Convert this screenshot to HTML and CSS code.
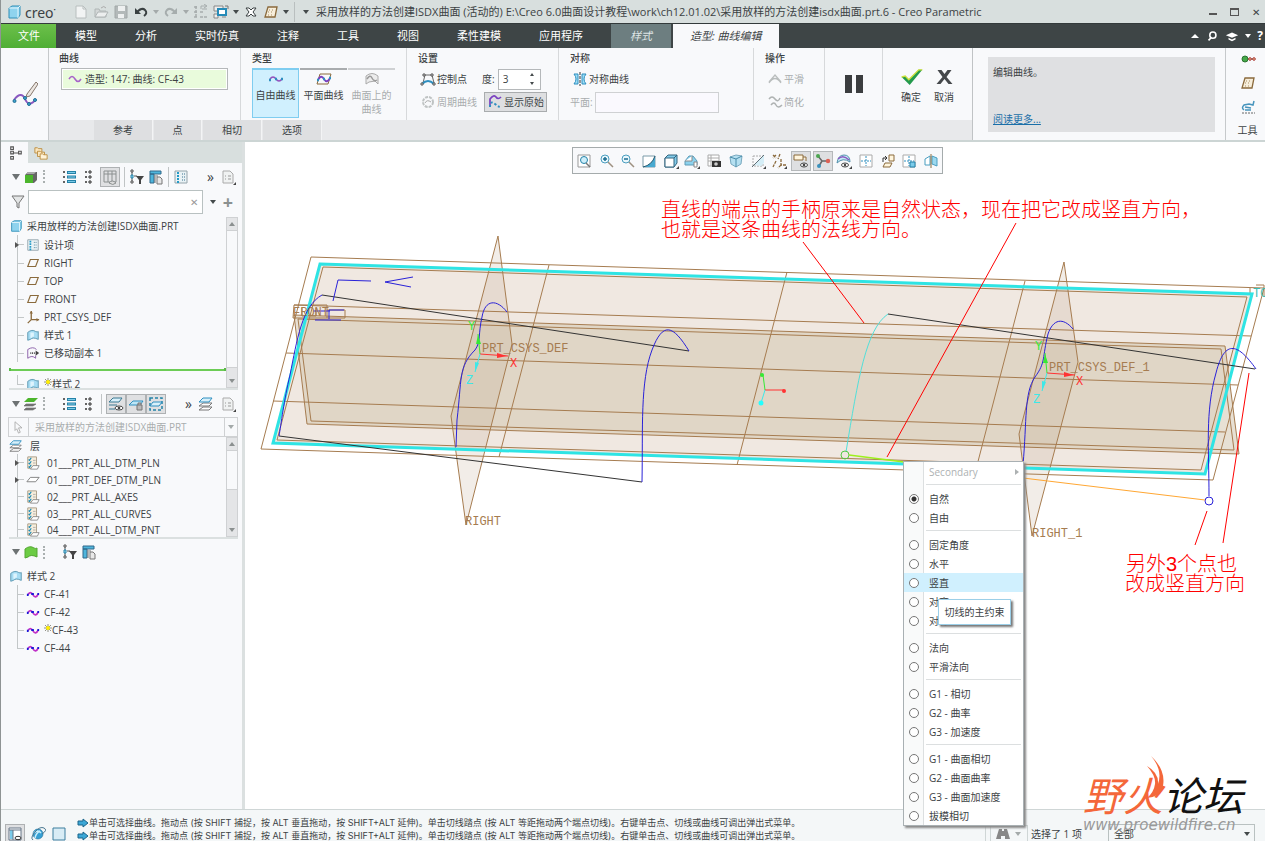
FILE: index.html
```
<!DOCTYPE html>
<html lang="zh-CN">
<head>
  <meta charset="UTF-8" />
  <meta name="viewport" content="width=device-width, initial-scale=1.0" />
  <title>采用放样的方法创建ISDX曲面 - Creo Parametric</title>
  <link rel="stylesheet" href="styles.css">
</head>
<body>
  <!-- icon sprite -->
  <svg class="sprite" aria-hidden="true">
    <symbol id="i-cube" viewBox="0 0 16 16"><path d="M3 4l3-2h8v9l-2 3H3z" fill="#8fd3ee" stroke="#2f8fb8"/><path d="M3 4h9l2-2M12 4v10" fill="none" stroke="#e4f6fd"/></symbol>
    <symbol id="i-new" viewBox="0 0 16 16"><path d="M3 2h7l3 3v9H3z" fill="#f2f4f4" stroke="#b8bebe"/><path d="M10 2v3h3" fill="none" stroke="#b8bebe"/></symbol>
    <symbol id="i-open" viewBox="0 0 16 16"><path d="M2 13V5h4l1 2h6v6z" fill="#d3d7d7" stroke="#b0b6b6"/><path d="M2 13l3-5h10l-3 5z" fill="#eceeee" stroke="#b0b6b6"/><path d="M8 4q3-3 5 0" fill="none" stroke="#aaa"/></symbol>
    <symbol id="i-save" viewBox="0 0 16 16"><path d="M2 2h12v12H2z" fill="#b3b9b9" stroke="#a2a8a8"/><path d="M5 2h7v5H5zM5 10h6v4H5z" fill="#eef0f0"/></symbol>
    <symbol id="i-undo" viewBox="0 0 16 16"><path d="M4 8q5-5 8-2t-1 6" fill="none" stroke="#3a4142" stroke-width="2"/><path d="M2 4v6h6z" fill="#3a4142"/></symbol>
    <symbol id="i-redo" viewBox="0 0 16 16"><path d="M12 8Q7 3 4 6t1 6" fill="none" stroke="#a6adad" stroke-width="2"/><path d="M14 4v6H8z" fill="#a6adad"/></symbol>
    <symbol id="i-regen" viewBox="0 0 16 16"><path d="M3 2v12M1 3h4M1 8h4M1 13h4M7 8h4M7 13h7" stroke="#a6adad" stroke-width="1.500" stroke-dasharray="3 1"/><path d="M8 5V2h5M11 0l3 2-3 2M9 5h5" fill="none" stroke="#a6adad"/></symbol>
    <symbol id="i-windows" viewBox="0 0 16 16"><path d="M1 2h9v5H1zM1 10h4v4H1zM9 13h4" fill="#eee" stroke="#888"/><path d="M5 5h8v6H5z" fill="#fff" stroke="#258bb8" stroke-width="2"/><path d="M12 2h3v3" fill="none" stroke="#777"/></symbol>
    <symbol id="i-closex" viewBox="0 0 16 16"><path d="M3 4h3l2 2 2-2h3l-3 4 3 4h-3L8 10l-2 2H3l3-4z" fill="#fff" stroke="#3a4142"/></symbol>
    <symbol id="i-sketch" viewBox="0 0 16 16"><path d="M5 3h9l-2 10H2z" fill="#f7eedb" stroke="#8a6a3c" stroke-width="1.300"/><path d="M6 6h6M5 8h6M5 11h6" stroke="#a88f65" stroke-dasharray="1 2"/></symbol>
    <symbol id="i-datum" viewBox="0 0 16 16"><path d="M5 4h9l-3 8H2z" fill="none" stroke="#8a6a3c" stroke-width="1.300"/></symbol>
    <symbol id="i-csys" viewBox="0 0 16 16"><path d="M6 1v10h9M6 11l-4 4" fill="none" stroke="#8a6a3c" stroke-width="1.500"/><path d="M4 4l2-3 2 3M12 9l3 2-3 2" fill="#8a6a3c"/></symbol>
    <symbol id="i-wave" viewBox="0 0 16 16"><path d="M2 8q3-5 6 0t6 0" fill="none" stroke="#a763c9" stroke-width="1.500"/></symbol>
    <symbol id="i-curve" viewBox="0 0 16 16"><path d="M2 8q3-4 6 0t6 0" fill="none" stroke="#9350bd" stroke-width="1.500"/><path d="M1 9h2M7 8h2M13 8h2" stroke="#2e8fc0" stroke-width="2.500"/></symbol>
    <symbol id="i-cf" viewBox="0 0 16 16"><path d="M2 9q3-5 6 0t6-1" fill="none" stroke="#c030c8" stroke-width="2"/><path d="M1 9h2M6 8h3M13 8h2" stroke="#1a1ad8" stroke-width="2.500"/></symbol>
    <symbol id="i-planecurve" viewBox="0 0 16 16"><path d="M4 3h11l-3 10H1z" fill="none" stroke="#8a6a3c"/><path d="M2 9q3-6 6-1t6-1" fill="none" stroke="#7a3fc0" stroke-width="1.800"/><path d="M1 9h2M7 8h2M13 7h2" stroke="#2e8fc0" stroke-width="2.500"/></symbol>
    <symbol id="i-surfcurve" viewBox="0 0 16 16"><path d="M2 13V5q6-5 12 0v8l-3-3-6 1z" fill="#ececec" stroke="#aaa"/><path d="M3 8q3-5 5-1t5 2" fill="none" stroke="#999" stroke-width="1.500"/></symbol>
    <symbol id="i-bigcurve" viewBox="0 0 26 26"><path d="M2 19C7 12 11 13 13 18S19 25 24 18" fill="none" stroke="#8a58c0" stroke-width="2"/><path d="M15 13L24 1l2 2-8 12-4 1z" fill="#ece7e2" stroke="#86776c"/><g fill="#3aa3cc" stroke="#226f96"><circle cx="2.500" cy="20" r="1.500"/><circle cx="13" cy="17" r="1.500"/><circle cx="17" cy="23" r="1.500"/><circle cx="23" cy="19" r="1.500"/></g></symbol>
    <symbol id="i-ctrl" viewBox="0 0 16 16"><path d="M3 12l2-8h7l2 8" fill="none" stroke="#666"/><path d="M2 13q6-6 12 0" fill="none" stroke="#2e8fc0" stroke-width="2"/><path d="M3 3h2v2H3zM11 3h2v2h-2zM1 12h2v2H1zM13 12h2v2h-2z" fill="#fff" stroke="#555"/></symbol>
    <symbol id="i-gear" viewBox="0 0 16 16"><circle cx="8" cy="8" r="5" fill="none" stroke="#bfc3c3" stroke-width="2" stroke-dasharray="3 1"/><path d="M5 9q2-4 6-1" fill="none" stroke="#aaa"/></symbol>
    <symbol id="i-orig" viewBox="0 0 16 16"><path d="M3 13V5q4-5 6-2t5 0" fill="none" stroke="#7a3fc0" stroke-width="1.700"/><path d="M3 13q0-7 5-3t6 3" fill="none" stroke="#2e8fc0" stroke-width="2" stroke-dasharray="2 2"/></symbol>
    <symbol id="i-sym" viewBox="0 0 16 16"><path d="M2 3h4v10H2q4-5 0-10zM14 3h-4v10h4q-4-5 0-10z" fill="#9bddf5" stroke="#2e8fc0"/><path d="M8 1v14" stroke="#333" stroke-dasharray="3 1"/></symbol>
    <symbol id="i-smooth" viewBox="0 0 16 16"><path d="M2 12q6-9 12 0M2 11L8 4l6 7" fill="none" stroke="#b9bdbd" stroke-width="1.300"/></symbol>
    <symbol id="i-simple" viewBox="0 0 16 16"><path d="M2 5q3-4 6 0t5-1M4 11q3-4 5 0t6 0" fill="none" stroke="#aeb2b2" stroke-width="1.500"/></symbol>
    <symbol id="i-pause" viewBox="0 0 20 20"><path d="M1 1h7v18H1zM12 1h7v18h-7z" fill="#3b3d3f"/></symbol>
    <symbol id="i-check" viewBox="0 0 24 20"><path d="M1 10l4-1 4 4L20 2h4L10 19z" fill="#249a4d"/><path d="M1 10l4-1 4 4L20 2h4" fill="none" stroke="#cbe03a" stroke-width="1.500"/></symbol>
    <symbol id="i-cross" viewBox="0 0 18 18"><path d="M2 2h4l3 4 3-4h4l-5 7 6 7h-4l-4-5-4 5H1l6-7z" fill="#45484b"/></symbol>
    <symbol id="i-dots" viewBox="0 0 16 16"><path d="M6 8h8" stroke="#333"/><circle cx="5" cy="8" r="3" fill="#45a848" stroke="#2b7330"/><circle cx="10" cy="8" r="1.300" fill="#f5d9a0" stroke="#a33"/><circle cx="14" cy="8" r="1.300" fill="#f5d9a0" stroke="#a33"/></symbol>
    <symbol id="i-robot" viewBox="0 0 16 16"><path d="M4 11q-3-2 0-5l5-1 4 1 1-4M5 8l6 1M5 11h6" fill="none" stroke="#4795bd" stroke-width="1.500"/><path d="M2 14h13" stroke="#666" stroke-dasharray="2 1"/></symbol>
    <symbol id="i-treetab" viewBox="0 0 16 16"><path d="M2 1h3v3H2zM2 6h3v3H2zM2 12h3v3H2zM11 6h3v3h-3zM5 8h6" fill="none" stroke="#555" stroke-width="1.300"/></symbol>
    <symbol id="i-folders" viewBox="0 0 16 16"><path d="M1 2h3l1 1h4v5H1z" fill="#fbe6bd" stroke="#b98a3c"/><path d="M4 6h3l1 1h4v5H4z" fill="#fbe6bd" stroke="#b98a3c"/><path d="M7 9h3l1 1h4v5H7z" fill="#fff3d8" stroke="#b98a3c"/></symbol>
    <symbol id="i-green" viewBox="0 0 16 16"><path d="M2 6l3-3h9v8l-3 3H2z" fill="#666"/><path d="M2 6h8v8H2z" fill="#4cb52c"/><path d="M3 5l2-2h8l-2 2z" fill="#aaa"/></symbol>
    <symbol id="i-list" viewBox="0 0 16 16"><path d="M5 3.500h9M5 8h9M5 12.500h9" stroke="#2482a8" stroke-width="3"/><path d="M6 3.500h7M6 8h7M6 12.500h7" stroke="#7ccbe8"/><path d="M1 3h2M1 8h2M1 13h2" stroke="#333" stroke-width="1.500"/></symbol>
    <symbol id="i-list2" viewBox="0 0 16 16"><path d="M8 2h2v2H8zM8 7h2v2H8zM8 12h2v2H8z" fill="none" stroke="#333"/><path d="M4 3h2M4 8h2M4 13h2" stroke="#333" stroke-width="1.500"/></symbol>
    <symbol id="i-table" viewBox="0 0 16 16"><path d="M2 2h12v11H2zM2 5h12M6 2v11M10 2v11" fill="none" stroke="#8b9090"/><path d="M7 14q3-4 7 0-3 3-7 0" fill="#ddd" stroke="#8b9090"/></symbol>
    <symbol id="i-treefilter" viewBox="0 0 16 16"><path d="M2 1h2v2H2zM2 12h2v2H2zM3 3v9M5 7h3" fill="none" stroke="#555"/><path d="M2 6h2v3H2z" fill="#9bddf5" stroke="#2482a8"/><path d="M7 7h8l-3 4v4h-2v-4z" fill="#444"/></symbol>
    <symbol id="i-cols" viewBox="0 0 16 16"><path d="M2 2h11v3H2zM2 5h4v9H2z" fill="#4eb5dc" stroke="#30698a"/><path d="M7 6v8M9 6v2" stroke="#777"/><path d="M9 8h3l2 2v5H9z" fill="#e8e8e8" stroke="#777"/></symbol>
    <symbol id="i-items" viewBox="0 0 16 16"><path d="M2 2h12v12H2z" fill="#e9f2f5" stroke="#94a4ab"/><path d="M5 3v11" stroke="#249ac7" stroke-width="2" stroke-dasharray="2 1"/><path d="M9 5h4M9 8h4M9 11h4" stroke="#38718d" stroke-dasharray="1 1"/></symbol>
    <symbol id="i-doc" viewBox="0 0 16 16"><path d="M3 2h7l3 3v9H3z" fill="#f0f2f2" stroke="#aaa"/><path d="M5 7h1M8 7h3M5 10h1M8 10h3" stroke="#999"/><path d="M16 13v3h-3z" fill="#444"/></symbol>
    <symbol id="i-funnel" viewBox="0 0 16 16"><path d="M2 2h12L9 9v5l-2-1V9z" fill="#e4e6e6" stroke="#777"/></symbol>
    <symbol id="i-style" viewBox="0 0 16 16"><path d="M2 14V5q5-4 9-1 2 1 3 0v9q-6-3-9 0z" fill="#a6dcf3" stroke="#5492ad"/><path d="M6 5v6M8 5v5" stroke="#def4fd" stroke-width="2"/></symbol>
    <symbol id="i-copy" viewBox="0 0 16 16"><path d="M2 14V4q6-4 10 0M2 14q5-4 9 0V11" fill="none" stroke="#8455a4"/><path d="M5 8h6" stroke="#444" stroke-dasharray="1 1" stroke-width="2"/><path d="M11 5l4 3-4 3z" fill="#444"/></symbol>
    <symbol id="i-layersg" viewBox="0 0 16 16"><path d="M5 2h10l-4 4H1z" fill="#4cb52c"/><path d="M3 8h10l-3 2H1zM3 12h10l-3 2H1z" fill="#777" stroke="#666" stroke-width=".6"/></symbol>
    <symbol id="i-layers" viewBox="0 0 16 16"><path d="M5 11h9l-3 3H1zM5 7h9l-3 3H1z" fill="#fff" stroke="#777"/><path d="M5 2h9l-3 4H1z" fill="#d8f0fa" stroke="#2e8fc0"/></symbol>
    <symbol id="i-layereye" viewBox="0 0 16 16"><path d="M5 2h9l-3 4H1zM1 9h8M1 13h6" fill="#d8f0fa" stroke="#3b7892"/><ellipse cx="11" cy="12" rx="4" ry="2" fill="#fff" stroke="#444"/><circle cx="11" cy="12" r="1.300" fill="#444"/></symbol>
    <symbol id="i-layerlock" viewBox="0 0 16 16"><path d="M5 5h10l-3 4H1z" fill="#bde6f6" stroke="#2e8fc0"/><path d="M9 9h5v5H9zM10 9V7h3v2" fill="#bbb" stroke="#777"/></symbol>
    <symbol id="i-layersel" viewBox="0 0 16 16"><path d="M2 2h12v12H2z" fill="none" stroke="#2482a8" stroke-width="1.500" stroke-dasharray="3 2"/><path d="M5 6h9l-3 4H2z" fill="#d8f0fa" stroke="#2e8fc0"/></symbol>
    <symbol id="i-checks" viewBox="0 0 16 16"><path d="M2 1h10v13H2z" fill="#f7eddb" stroke="#a5977f"/><path d="M3 4l1 1 2-3M3 8l1 1 2-3M3 12l1 1 2-3" fill="none" stroke="#1989b5" stroke-width="1.300"/><path d="M8 5h3M8 8h3" stroke="#aaa"/><path d="M8 11h7l-2 4H5z" fill="#fff" stroke="#888"/></symbol>
    <symbol id="i-slab" viewBox="0 0 16 16"><path d="M5 5h10l-4 5H1z" fill="#fff" stroke="#777"/></symbol>
    <symbol id="i-surfg" viewBox="0 0 16 16"><path d="M2 14V5q5-4 9-1 2 1 3 0v9q-6-3-9 0z" fill="#6ccc44" stroke="#54a733"/></symbol>
    <symbol id="i-cursor" viewBox="0 0 16 16"><path d="M4 2l8 7H8l2 5-2 1-2-5-2 2z" fill="none" stroke="#aaa"/></symbol>
    <symbol id="i-star" viewBox="0 0 8 8"><path d="M1 1l6 6M7 1L1 7M4 0v8M0 4h8" stroke="#665" stroke-width=".7"/><circle cx="4" cy="4" r="2" fill="#ffee00"/></symbol>
    <symbol id="i-fit" viewBox="0 0 16 16"><path d="M2 2h12v12H2z" fill="#fff" stroke="#999"/><circle cx="8" cy="7" r="3.500" fill="#cdeefa" stroke="#2482a8"/><path d="M10 10l4 4" stroke="#777" stroke-width="1.500"/></symbol>
    <symbol id="i-zin" viewBox="0 0 16 16"><circle cx="7" cy="6" r="4" fill="#e9f7fc" stroke="#4a9ec0"/><path d="M10 9l5 5" stroke="#9d9080" stroke-width="1.500"/><path d="M5 6h4M7 4v4" stroke="#1b6d90" stroke-width="1.500"/></symbol>
    <symbol id="i-zout" viewBox="0 0 16 16"><circle cx="7" cy="6" r="4" fill="#e9f7fc" stroke="#4a9ec0"/><path d="M10 9l5 5" stroke="#9d9080" stroke-width="1.500"/><path d="M5 6h4" stroke="#1b6d90" stroke-width="1.500"/></symbol>
    <symbol id="i-repaint" viewBox="0 0 16 16"><path d="M2 3h12v11H2z" fill="#fff" stroke="#7a9aa8"/><path d="M2 14Q11 12 14 3v11z" fill="#48a9d0"/><path d="M2 14Q11 12 14 3" fill="none" stroke="#24586f"/></symbol>
    <symbol id="i-box" viewBox="0 0 16 16"><path d="M2 5l3-3h9v8l-3 4H2z" fill="#83cceb" stroke="#32657e"/><path d="M2 5h9v9H2z" fill="#fff" stroke="#32657e"/><path d="M11 5l3-3" stroke="#32657e"/><path d="M16 13v3h-3z" fill="#444"/></symbol>
    <symbol id="i-house" viewBox="0 0 16 16"><path d="M1 8l4-5h4l4 5v4H1z" fill="#8cd2ee" stroke="#5d9ab5"/><path d="M1 8h7V3M10 9h3v5h-3z" fill="#fff" stroke="#888"/><path d="M16 13v3h-3z" fill="#444"/></symbol>
    <symbol id="i-cam" viewBox="0 0 16 16"><path d="M2 2h11v11H2zM2 5h11M2 8h11M5 2v11" fill="#fff" stroke="#aaa"/><path d="M6 8h9v6H6z" fill="#333"/><circle cx="10" cy="11" r="1.800" fill="#ccc"/></symbol>
    <symbol id="i-persp" viewBox="0 0 16 16"><path d="M2 4l6-2 6 1-1 8-5 3-5-3z" fill="#b5e0f1" stroke="#79a9bf"/><path d="M2 4l6 2 6-3M8 6v8" fill="none" stroke="#498caa"/></symbol>
    <symbol id="i-section" viewBox="0 0 16 16"><path d="M3 3h10v10H3z" fill="none" stroke="#aaa" stroke-dasharray="2 1"/><path d="M4 12L14 2v8l-3 3z" fill="#d5eef7"/><path d="M2 14L14 2" stroke="#5e6e75"/><path d="M16 13v3h-3z" fill="#444"/></symbol>
    <symbol id="i-datums" viewBox="0 0 16 16"><path d="M2 2l3 3M5 2L2 5M9 1L7 6M10 6v6h5M10 12l-3 3M5 8l-3 6" stroke="#8a6a3c" stroke-width="1.300" stroke-dasharray="3 1" fill="none"/><path d="M16 13v3h-3z" fill="#444"/></symbol>
    <symbol id="i-anno" viewBox="0 0 16 16"><path d="M1 2h9v5H1zM10 4h3v4" fill="#fff5dd" stroke="#8a6a3c"/><ellipse cx="11" cy="12" rx="3.500" ry="2" fill="#fff" stroke="#444"/><circle cx="11" cy="12" r="1.300" fill="#444"/></symbol>
    <symbol id="i-spin" viewBox="0 0 16 16"><path d="M3 3l4 5 6 0M7 8l-3 5" fill="none" stroke="#666" stroke-width="1.500"/><circle cx="3" cy="3" r="2" fill="#4ba650"/><circle cx="13" cy="8" r="2.200" fill="#dc6054"/><circle cx="4" cy="13" r="2" fill="#3a92bd"/></symbol>
    <symbol id="i-stylevis" viewBox="0 0 16 16"><path d="M1 10Q2 2 8 2t6 7q-7-5-13 1" fill="#c5e8f6" stroke="#5492ad"/><path d="M2 6q5-5 11 1" fill="none" stroke="#8a58c0" stroke-width="1.500"/><ellipse cx="9" cy="12" rx="3.500" ry="2" fill="#fff" stroke="#444"/><circle cx="9" cy="12" r="1.200" fill="#444"/><path d="M16 13v3h-3z" fill="#444"/></symbol>
    <symbol id="i-grid" viewBox="0 0 16 16"><path d="M2 2h12v12H2z" fill="#fff" stroke="#aaa"/><path d="M8 3v10M3 8h10" stroke="#2e8fc0" stroke-dasharray="2 1"/></symbol>
    <symbol id="i-orient" viewBox="0 0 16 16"><path d="M9 2h5v6H9zM5 10h7l-2 4H3z" fill="#fff5dd" stroke="#8a6a3c"/><path d="M3 9V5h3M5 3l2 2-2 2" fill="none" stroke="#333"/></symbol>
    <symbol id="i-gridb" viewBox="0 0 16 16"><path d="M2 2h12v12H2z" fill="#fff" stroke="#aaa"/><path d="M8 3v10M3 8h10" stroke="#2e8fc0" stroke-dasharray="2 1"/><path d="M9 9h5v5H9z" fill="#7bcbea" stroke="#2482a8"/></symbol>
    <symbol id="i-mirror" viewBox="0 0 16 16"><path d="M2 12V6l5-3v9z" fill="#fff" stroke="#4a9ec0"/><path d="M9 3l5 2v8l-5-2z" fill="#9bd8ef" stroke="#4a9ec0"/><path d="M8 1v14" stroke="#8a6a3c"/></symbol>
    <symbol id="i-panel" viewBox="0 0 16 16"><path d="M2 2h12v12H2z" fill="#fff" stroke="#678"/><path d="M3 4h3v9H3z" fill="#7bcbea"/><path d="M2 4h12M6 4v10" stroke="#678"/><ellipse cx="11" cy="12" rx="3" ry="1.700" fill="#fff" stroke="#333"/></symbol>
    <symbol id="i-globe" viewBox="0 0 16 16"><circle cx="8" cy="8" r="5" fill="#36a0d4" stroke="#1c6d97" stroke-width=".6"/><path d="M4 7q4-4 7 0M5 12q1-5 5-7" fill="none" stroke="#c6ecfb" stroke-width="1.500"/><path d="M3 14Q0 12 5 6t9-4-2 6" fill="none" stroke="#4a7790"/></symbol>
    <symbol id="i-square" viewBox="0 0 16 16"><path d="M2 2h12v12H2z" fill="#d8ecf5" stroke="#3c7f9f"/></symbol>
    <symbol id="i-arrow" viewBox="0 0 12 10"><path d="M1 3h5V1l5 4-5 4V7H1z" fill="#3ba7d6" stroke="#1b658a"/></symbol>
    <symbol id="i-bino" viewBox="0 0 16 16"><path d="M4 3h3v2h2V3h3l3 10h-5v-3H6v3H1z" fill="#888"/></symbol>
    <symbol id="i-search" viewBox="0 0 16 16"><circle cx="9" cy="7" r="3.500" fill="none" stroke="#fff" stroke-width="1.800"/><path d="M7 10l-3 3" stroke="#fff" stroke-width="2"/></symbol>
    <symbol id="i-learn" viewBox="0 0 16 16"><path d="M1 7l7-3 7 3-7 3zM4 10l4 2 4-2v2l-4 2-4-2z" fill="#fff"/></symbol>
    <symbol id="i-flame" viewBox="0 0 20 44"><path d="M5 0Q20 14 17 30 14 41 1 42 8 36 9 28 10 20 1 10 13 17 12 28 17 14 5 0" fill="#f4673a"/></symbol>
  </svg>

  <div class="app">
    <header class="titlebar">
      <svg class="icon"><use href="#i-cube"/></svg>
      <span class="brand">creo<sup>•</sup></span>
      <div class="quick">
        <button aria-label="新建"><svg class="icon"><use href="#i-new"/></svg></button>
        <button aria-label="打开"><svg class="icon"><use href="#i-open"/></svg></button>
        <button aria-label="保存"><svg class="icon"><use href="#i-save"/></svg></button>
        <button aria-label="撤消"><svg class="icon"><use href="#i-undo"/></svg></button>
        <i class="caret dim"></i>
        <button aria-label="重做"><svg class="icon"><use href="#i-redo"/></svg></button>
        <i class="caret dim"></i>
        <button aria-label="重新生成"><svg class="icon"><use href="#i-regen"/></svg></button>
        <button aria-label="窗口"><svg class="icon"><use href="#i-windows"/></svg></button>
        <i class="caret"></i>
        <button aria-label="关闭"><svg class="icon"><use href="#i-closex"/></svg></button>
        <button aria-label="平面"><svg class="icon"><use href="#i-sketch"/></svg></button>
        <i class="caret"></i>
      </div>
      <i class="caret more"></i>
      <h1>采用放样的方法创建ISDX曲面 (活动的) E:\Creo 6.0曲面设计教程\work\ch12.01.02\采用放样的方法创建isdx曲面.prt.6 - Creo Parametric</h1>
      <div class="winbtns">
        <button aria-label="最小化"><i class="min"></i></button>
        <button aria-label="最大化"><i class="max"></i></button>
        <button aria-label="关闭窗口">✕</button>
      </div>
    </header>

    <nav class="menubar">
      <a href="#" class="file">文件</a>
      <a href="#">模型</a>
      <a href="#">分析</a>
      <a href="#">实时仿真</a>
      <a href="#">注释</a>
      <a href="#">工具</a>
      <a href="#">视图</a>
      <a href="#">柔性建模</a>
      <a href="#">应用程序</a>
      <a href="#" class="style-tab">样式</a>
      <a href="#" class="current">造型: 曲线编辑</a>
      <div class="menu-right">
        <i class="chevron"></i>
        <svg class="icon small"><use href="#i-search"/></svg>
        <svg class="icon small"><use href="#i-learn"/></svg>
        <i class="caret white"></i>
        <b>?</b>
      </div>
    </nav>

    <section class="ribbon">
      <div class="tool-mark"><svg><use href="#i-bigcurve"/></svg></div>
      <div class="dash">
        <div class="groups">
          <div class="group g-curve">
            <h2>曲线</h2>
            <div class="collector"><svg class="icon"><use href="#i-wave"/></svg>造型: 147: 曲线: CF-43</div>
          </div>
          <div class="group g-type">
            <h2>类型</h2>
            <div class="types">
              <button class="on"><svg class="icon"><use href="#i-curve"/></svg>自由曲线</button>
              <button><svg class="icon"><use href="#i-planecurve"/></svg>平面曲线</button>
              <button disabled><svg class="icon"><use href="#i-surfcurve"/></svg>曲面上的曲线</button>
            </div>
          </div>
          <div class="group g-set">
            <h2>设置</h2>
            <div class="line">
              <button class="cmd"><svg class="icon"><use href="#i-ctrl"/></svg>控制点</button>
              <label class="degree">度: <span class="spinner"><input type="text" value="3"><span class="spin-arrows"><i class="caret up"></i><i class="caret"></i></span></span></label>
            </div>
            <div class="line">
              <button class="cmd" disabled><svg class="icon"><use href="#i-gear"/></svg>周期曲线</button>
              <button class="cmd pressed"><svg class="icon"><use href="#i-orig"/></svg>显示原始</button>
            </div>
          </div>
          <div class="group g-sym">
            <h2>对称</h2>
            <div class="line"><button class="cmd"><svg class="icon"><use href="#i-sym"/></svg>对称曲线</button></div>
            <div class="line"><label class="plane">平面: <input type="text" disabled></label></div>
          </div>
          <div class="group g-op">
            <h2>操作</h2>
            <div class="line"><button class="cmd" disabled><svg class="icon"><use href="#i-smooth"/></svg>平滑</button></div>
            <div class="line"><button class="cmd" disabled><svg class="icon"><use href="#i-simple"/></svg>简化</button></div>
          </div>
          <div class="group g-pause"><button aria-label="暂停"><svg><use href="#i-pause"/></svg></button></div>
          <div class="group g-ok">
            <button><svg><use href="#i-check"/></svg>确定</button>
            <button><svg><use href="#i-cross"/></svg>取消</button>
          </div>
        </div>
        <div class="subtabs">
          <button class="wide">参考</button>
          <button>点</button>
          <button class="wide">相切</button>
          <button class="wide">选项</button>
        </div>
      </div>
      <div class="help">
        <div class="help-box">
          <p>编辑曲线。</p>
          <a href="#">阅读更多...</a>
        </div>
      </div>
      <div class="side-tools">
        <svg class="icon"><use href="#i-dots"/></svg>
        <svg class="icon"><use href="#i-sketch"/></svg>
        <svg class="icon"><use href="#i-robot"/></svg>
        <span>工具</span>
      </div>
    </section>

    <main>
      <aside>
        <div class="aside-tabs">
          <button class="on" aria-label="模型树"><svg class="icon small"><use href="#i-treetab"/></svg></button>
          <button aria-label="文件夹"><svg class="icon small"><use href="#i-folders"/></svg></button>
        </div>
        <div class="bar">
          <i class="caret big"></i>
          <svg class="icon"><use href="#i-green"/></svg>
          <i class="grip"></i>
          <svg class="icon"><use href="#i-list"/></svg>
          <svg class="icon"><use href="#i-list2"/></svg>
          <span class="boxed"><svg class="icon"><use href="#i-table"/></svg></span>
          <i class="vsep"></i>
          <svg class="icon"><use href="#i-treefilter"/></svg>
          <svg class="icon"><use href="#i-cols"/></svg>
          <i class="vsep"></i>
          <svg class="icon"><use href="#i-items"/></svg>
          <span class="more-btns">»<svg class="icon"><use href="#i-doc"/></svg></span>
        </div>
        <div class="search">
          <svg class="icon"><use href="#i-funnel"/></svg>
          <span class="search-box"><input type="text" aria-label="过滤"><i>✕</i></span>
          <i class="caret"></i>
          <b>+</b>
        </div>
        <div class="pane model-pane">
          <div class="tree">
            <div class="row root"><svg class="icon"><use href="#i-cube"/></svg>采用放样的方法创建ISDX曲面.PRT</div>
            <div class="row open"><svg class="icon"><use href="#i-items"/></svg>设计项</div>
            <div class="row"><svg class="icon"><use href="#i-datum"/></svg>RIGHT</div>
            <div class="row"><svg class="icon"><use href="#i-datum"/></svg>TOP</div>
            <div class="row"><svg class="icon"><use href="#i-datum"/></svg>FRONT</div>
            <div class="row"><svg class="icon"><use href="#i-csys"/></svg>PRT_CSYS_DEF</div>
            <div class="row"><svg class="icon"><use href="#i-style"/></svg>样式 1</div>
            <div class="row"><svg class="icon"><use href="#i-copy"/></svg>已移动副本 1</div>
            <div class="insert-line"></div>
            <div class="row last"><svg class="icon"><use href="#i-style"/></svg><svg class="star"><use href="#i-star"/></svg>样式 2</div>
          </div>
          <div class="scroll"><i class="caret up"></i><div class="thumb long"></div><i class="caret"></i></div>
        </div>
        <div class="bar layer-bar">
          <i class="caret big"></i>
          <svg class="icon"><use href="#i-layersg"/></svg>
          <i class="grip"></i>
          <svg class="icon"><use href="#i-list"/></svg>
          <svg class="icon"><use href="#i-list2"/></svg>
          <i class="vsep"></i>
          <span class="boxed-set">
            <span class="boxed"><svg class="icon"><use href="#i-layereye"/></svg></span>
            <span class="boxed"><svg class="icon"><use href="#i-layerlock"/></svg></span>
            <span class="boxed"><svg class="icon"><use href="#i-layersel"/></svg></span>
          </span>
          <span class="more-btns">»<svg class="icon"><use href="#i-layers"/></svg><svg class="icon"><use href="#i-doc"/></svg></span>
        </div>
        <div class="model-select">
          <svg class="icon"><use href="#i-cursor"/></svg>
          <select disabled aria-label="活动层对象"><option>采用放样的方法创建ISDX曲面.PRT</option></select>
          <i class="caret dim"></i>
        </div>
        <div class="pane layer-pane">
          <div class="tree">
            <div class="row root"><svg class="icon"><use href="#i-layers"/></svg>层</div>
            <div class="row open"><svg class="icon"><use href="#i-checks"/></svg>01___PRT_ALL_DTM_PLN</div>
            <div class="row open"><svg class="icon"><use href="#i-slab"/></svg>01___PRT_DEF_DTM_PLN</div>
            <div class="row"><svg class="icon"><use href="#i-checks"/></svg>02___PRT_ALL_AXES</div>
            <div class="row"><svg class="icon"><use href="#i-checks"/></svg>03___PRT_ALL_CURVES</div>
            <div class="row"><svg class="icon"><use href="#i-checks"/></svg>04___PRT_ALL_DTM_PNT</div>
          </div>
          <div class="scroll"><i class="caret up"></i><div class="thumb"></div><i class="caret"></i></div>
        </div>
        <div class="bar style-bar">
          <i class="caret big"></i>
          <svg class="icon"><use href="#i-surfg"/></svg>
          <i class="grip"></i>
          <svg class="icon"><use href="#i-treefilter"/></svg>
          <svg class="icon"><use href="#i-cols"/></svg>
        </div>
        <div class="tree style-tree">
          <div class="row root"><svg class="icon"><use href="#i-style"/></svg>样式 2</div>
          <div class="row"><svg class="icon"><use href="#i-cf"/></svg>CF-41</div>
          <div class="row"><svg class="icon"><use href="#i-cf"/></svg>CF-42</div>
          <div class="row"><svg class="icon"><use href="#i-cf"/></svg><svg class="star"><use href="#i-star"/></svg>CF-43</div>
          <div class="row last"><svg class="icon"><use href="#i-cf"/></svg>CF-44</div>
        </div>
      </aside>

      <div class="viewport">
        <svg class="scene" viewBox="245 142 1020 667" preserveAspectRatio="xMinYMin meet">
          <!-- datum plane fills -->
          <path d="M320 264L1252 294 1205 474 273 443z" fill="#f0e8e1"/>
          <path d="M294 315L1225 346 1239 454 307 424z" fill="#d3c6b0" fill-opacity=".55"/>
          <path d="M498 236L512 344 466 525 451 416zM1064 262L1078 362 1032 536 1019 434z" fill="#bda78a" fill-opacity=".2"/>
          <!-- datum plane borders -->
          <g class="brown">
            <path d="M311 257L1264 288 1213 480 261 449z"/>
            <path d="M323 267L1247 297 1201 470 277 440z"/>
            <path d="M294 315L1225 346 1239 454 307 424z"/>
            <path d="M298 319L1221 349 1234 450 311 421z"/>
            <path d="M294 305L1251 336M286 353L1238 385M273 401L1225 432"/>
            <path d="M549 265L499 457M787 272L737 465M1025 281L975 473"/>
            <path d="M498 236L512 344 466 525 451 416zM1064 262L1078 362 1032 536 1019 434z"/>
            <path d="M294 305h33v13h-34zM302 308v8h14v-8M327 310h18v8h-18M1250 288v6M1256 285h8v12"/>
          </g>
          <path class="sel" d="M320 264L1252 294 1205 474 273 443z"/>
          <!-- curves -->
          <path class="black" d="M322 295L689 351M279 436L642 482M888 314L1255 369"/>
          <g class="blue">
            <path d="M322 295C302 306 297 340 290 375 284 400 281 425 279 436"/>
            <path d="M507 312C497 299 485 299 482 317 478 334 481 342 475 350 458 367 462 379 457 420L456 447"/>
            <path d="M689 351C673 325 663 321 652 350 640 382 643 428 642 482"/>
            <path d="M1073 329C1063 317 1053 319 1048 334 1042 358 1046 362 1035 377 1024 393 1027 420 1023 465"/>
            <path d="M1256 369C1239 345 1225 337 1216 373 1205 412 1209 448 1209 496"/>
            <path d="M333 301l5-21 33 1M413 277l-28 5 26 5M313 311h17M315 320h26M329 319v-9h15"/>
            <circle cx="1209" cy="501" r="4"/>
          </g>
          <path d="M888 314C866 329 858 379 846 452" fill="none" stroke="#53dfd9"/>
          <circle cx="845" cy="455" r="4" fill="none" stroke="#55c845"/>
          <path d="M849 455L904 462" stroke="#9ef01c" stroke-width="1.500"/>
          <path d="M1023 478L1205 500" stroke="#ffa733"/>
          <!-- coordinate systems -->
          <g id="axes">
            <path d="M480 354L478 334" stroke="#35e935"/><path d="M476 344l2-9 3 9z" fill="#35e935"/>
            <path d="M480 354L508 356" stroke="#f33"/><path d="M497 353l10 3-10 2z" fill="#f33"/>
            <path d="M480 354L475 372" stroke="#3de8e8"/><path d="M475 362l4 1-4 9z" fill="#3de8e8"/>
          </g>
          <use href="#axes" x="567" y="19"/>
          <path d="M765 390l-2-15" stroke="#35e935"/><path d="M765 390h19" stroke="#f33"/><path d="M765 390l-4 13" stroke="#3de8e8"/>
          <circle cx="762" cy="375" r="2" fill="#35e935"/><circle cx="784" cy="391" r="2" fill="#f33"/><circle cx="761" cy="403" r="2.500" fill="#2ff"/>
          <g class="cad">
            <text x="482" y="352">PRT_CSYS_DEF</text>
            <text x="1049" y="371">PRT_CSYS_DEF_1</text>
            <text x="465" y="525">RIGHT</text>
            <text x="1032" y="537">RIGHT_1</text>
            <text x="293" y="316">FRONT</text>
            <text x="1253" y="297" fill="#3cbcb4">TOP</text>
            <text x="468" y="330" fill="#35e935">Y</text><text x="510" y="367" fill="#f33">X</text><text x="466" y="384" fill="#3de8e8">Z</text>
            <text x="1035" y="350" fill="#35e935">Y</text><text x="1076" y="385" fill="#f33">X</text><text x="1033" y="403" fill="#3de8e8">Z</text>
          </g>
          <!-- notes -->
          <path d="M803 242L864 323M1016 223L887 457M1207 511L1195 545M1249 373L1223 543" stroke="#f00"/>
          <g class="note">
            <text x="661" y="217">直线的端点的手柄原来是自然状态，现在把它改成竖直方向，</text>
            <text x="661" y="237">也就是这条曲线的法线方向。</text>
            <text x="1126" y="571">另外3个点也</text>
            <text x="1125" y="591">改成竖直方向</text>
          </g>
        </svg>
        <div class="view-tools">
          <button aria-label="重新调整"><svg class="icon"><use href="#i-fit"/></svg></button>
          <button aria-label="放大"><svg class="icon"><use href="#i-zin"/></svg></button>
          <button aria-label="缩小"><svg class="icon"><use href="#i-zout"/></svg></button>
          <button aria-label="重画"><svg class="icon"><use href="#i-repaint"/></svg></button>
          <button aria-label="显示样式"><svg class="icon"><use href="#i-box"/></svg></button>
          <button aria-label="已保存方向"><svg class="icon"><use href="#i-house"/></svg></button>
          <button aria-label="视图管理器"><svg class="icon"><use href="#i-cam"/></svg></button>
          <button aria-label="透视图"><svg class="icon"><use href="#i-persp"/></svg></button>
          <button aria-label="截面"><svg class="icon"><use href="#i-section"/></svg></button>
          <button aria-label="基准显示"><svg class="icon"><use href="#i-datums"/></svg></button>
          <button class="on" aria-label="注释显示"><svg class="icon"><use href="#i-anno"/></svg></button>
          <button class="on" aria-label="旋转中心"><svg class="icon"><use href="#i-spin"/></svg></button>
          <button aria-label="样式显示"><svg class="icon"><use href="#i-stylevis"/></svg></button>
          <button aria-label="四视图"><svg class="icon"><use href="#i-grid"/></svg></button>
          <button aria-label="定向"><svg class="icon"><use href="#i-orient"/></svg></button>
          <button aria-label="活动视图"><svg class="icon"><use href="#i-gridb"/></svg></button>
          <button aria-label="镜像"><svg class="icon"><use href="#i-mirror"/></svg></button>
        </div>
      </div>
    </main>

    <footer>
      <div class="foot-icons">
        <span class="boxed"><svg class="icon"><use href="#i-panel"/></svg></span>
        <svg class="icon"><use href="#i-globe"/></svg>
        <svg class="icon"><use href="#i-square"/></svg>
      </div>
      <div class="messages">
        <p><svg><use href="#i-arrow"/></svg>单击可选择曲线。拖动点 (按 SHIFT 捕捉，按 ALT 垂直拖动，按 SHIFT+ALT 延伸)。单击切线踏点 (按 ALT 等距拖动两个端点切线)。右键单击点、切线或曲线可调出弹出式菜单。</p>
        <p><svg><use href="#i-arrow"/></svg>单击可选择曲线。拖动点 (按 SHIFT 捕捉，按 ALT 垂直拖动，按 SHIFT+ALT 延伸)。单击切线踏点 (按 ALT 等距拖动两个端点切线)。右键单击点、切线或曲线可调出弹出式菜单。</p>
      </div>
      <div class="picker">
        <span class="find"><svg class="icon"><use href="#i-bino"/></svg><i class="caret dim"></i></span>
        <label for="filter">选择了 1 项</label>
        <span class="filter"><select id="filter"><option>全部</option></select><i class="caret"></i></span>
      </div>
    </footer>

    <div class="popup">
      <div class="item sub">Secondary<i></i></div>
      <hr>
      <label class="item"><input type="radio" name="tan" checked>自然</label>
      <label class="item"><input type="radio" name="tan">自由</label>
      <hr>
      <label class="item"><input type="radio" name="tan">固定角度</label>
      <label class="item"><input type="radio" name="tan">水平</label>
      <label class="item hover"><input type="radio" name="tan">竖直</label>
      <label class="item"><input type="radio" name="tan">对齐</label>
      <label class="item"><input type="radio" name="tan">对称</label>
      <hr>
      <label class="item"><input type="radio" name="tan">法向</label>
      <label class="item"><input type="radio" name="tan">平滑法向</label>
      <hr>
      <label class="item"><input type="radio" name="tan">G1 - 相切</label>
      <label class="item"><input type="radio" name="tan">G2 - 曲率</label>
      <label class="item"><input type="radio" name="tan">G3 - 加速度</label>
      <hr>
      <label class="item"><input type="radio" name="tan">G1 - 曲面相切</label>
      <label class="item"><input type="radio" name="tan">G2 - 曲面曲率</label>
      <label class="item"><input type="radio" name="tan">G3 - 曲面加速度</label>
      <label class="item"><input type="radio" name="tan">拔模相切</label>
      <div class="tip">切线的主约束</div>
    </div>

    <div class="watermark">
      <div class="wm-name"><span>野火</span><span class="dark">论坛</span><svg><use href="#i-flame"/></svg></div>
      <div class="wm-url">www.proewildfire.cn</div>
    </div>
  </div>
</body>
</html>
```
FILE: styles.css
```
* {
  box-sizing: border-box;
}
body {
  margin: 0;
  height: 100vh;
  overflow: hidden;
  font-family: "Open Sans", "Noto Sans CJK SC", sans-serif;
  font-size: 10px;
  line-height: 14px;
  color: #3c4244;
}
h1, h2, p {
  margin: 0;
  font-weight: normal;
}
a {
  color: inherit;
  text-decoration: none;
}
button, input, select {
  font: inherit;
  color: inherit;
  padding: 0;
  margin: 0;
  border: none;
  background: none;
}
button:disabled {
  color: #a9adae;
}
.sprite {
  position: absolute;
  width: 0;
  height: 0;
}
.icon {
  width: 16px;
  height: 16px;
  flex: none;
  display: block;
}
.icon.small {
  width: 14px;
  height: 14px;
}
.caret {
  flex: none;
  border: 3px solid transparent;
  border-top: 4px solid #444a4b;
  border-bottom: none;
}
.caret.dim {
  border-top-color: #a4aaaa;
}
.caret.white {
  border-top-color: #fff;
}
.caret.big {
  border-width: 6px 4px 0;
  border-top-color: #6d7273;
}
.caret.up {
  border-top: none;
  border-bottom: 4px solid #8b9090;
}
.app {
  position: relative;
  height: 100%;
  display: flex;
  flex-direction: column;
  border-left: 1px solid #8f9494;
}

/* title bar */
.titlebar {
  height: 23px;
  flex: none;
  background: #d8dfde;
  display: flex;
  align-items: center;
  padding-left: 5px;
}
.brand {
  font-family: "Noto Sans", sans-serif;
  font-size: 14px;
  margin-left: 3px;
  width: 48px;
}
.brand sup {
  font-size: 6px;
}
.quick {
  display: flex;
  align-items: center;
  gap: 4px;
  width: 222px;
  height: 20px;
  border-right: 1px solid #b9bfbf;
}
.more {
  margin: 0 7px 0 8px;
}
.titlebar h1 {
  font-size: 11px;
  flex: 1;
  white-space: nowrap;
}
.winbtns {
  display: flex;
  align-items: center;
  gap: 13px;
  padding-right: 5px;
}
.winbtns button {
  display: flex;
  align-items: center;
}
.min {
  width: 8px;
  height: 6px;
  border-bottom: 2px solid #555;
}
.max {
  width: 9px;
  height: 8px;
  border: 1px solid #555;
  border-top-width: 2px;
}

/* menu tabs */
.menubar {
  height: 25px;
  flex: none;
  background: #3e4546;
  color: #fff;
  display: flex;
  font-size: 11px;
  line-height: 24px;
  border-top: 1px solid #333a3b;
}
.menubar a {
  padding: 0 19px;
}
.menubar a.file {
  padding: 0 16px 0 17px;
  background: linear-gradient(#6cc04a, #4fae35);
}
.menubar a.style-tab {
  margin-left: 9px;
  background: #6d7e80;
  font-style: italic;
  color: #dfe5e5;
}
.menubar a.current {
  margin-left: 2px;
  padding: 0 17px;
  background: #f8f9fb;
  color: #3c4244;
  font-style: italic;
}
.menu-right {
  margin-left: auto;
  display: flex;
  align-items: center;
  gap: 6px;
  padding-right: 2px;
}
.menu-right b {
  font-size: 12px;
}
.chevron {
  border: 4px solid transparent;
  border-top: none;
  border-bottom-color: #fff;
}

/* ribbon */
.ribbon {
  height: 94px;
  flex: none;
  display: flex;
  background: #f8f9fb;
  border-bottom: 2px solid #ccd5d4;
}
.tool-mark {
  width: 48px;
  border-right: 1px solid #c6c9cb;
  display: flex;
  align-items: center;
  justify-content: center;
}
.tool-mark svg {
  width: 26px;
  height: 26px;
}
.dash {
  width: 924px;
  display: flex;
  flex-direction: column;
  border-right: 1px solid #c0c3c5;
}
.groups {
  display: flex;
  flex: 1;
}
.group {
  border-right: 1px solid #d7d9db;
  padding: 3px 0 0 11px;
}
.group h2 {
  font-size: 10px;
  font-weight: 500;
  margin-bottom: 3px;
}
.g-curve { width: 192px; padding-left: 10px; }
.g-type { width: 166px; }
.g-set { width: 152px; }
.g-sym { width: 195px; }
.g-op { width: 71px; }
.g-pause { width: 58px; }
.collector {
  width: 167px;
  height: 22px;
  margin-left: 2px;
  border: 1px solid #b5b8ba;
  outline: 1px solid #fff;
  outline-offset: -2px;
  background: #e9fbdc;
  display: flex;
  align-items: center;
  gap: 2px;
  padding-left: 5px;
}
.types {
  display: flex;
  gap: 1px;
}
.types button {
  width: 47px;
  height: 50px;
  border-top: 2px solid #a9acae;
  display: flex;
  flex-direction: column;
  align-items: center;
  gap: 1px;
  padding: 1px 0 0;
}
.types button.on {
  background: #d0f0fe;
  border: 1px solid #7fcdf0;
  border-top-width: 2px;
}
.types button:disabled {
  border-top-color: #cfd1d3;
  padding: 1px 3px 0;
}
.line {
  height: 24px;
  display: flex;
  align-items: center;
}
.types + .line, .group h2 + .line {
  height: 22px;
}
.line .cmd {
  height: 20px;
  display: flex;
  align-items: center;
  gap: 1px;
  padding: 0 3px 0 2px;
  white-space: nowrap;
}
.line .cmd.pressed {
  margin-left: 4px;
  border: 1px solid #a9acae;
  background: #dedfe1;
  padding: 0 2px;
}
.degree {
  display: flex;
  align-items: center;
  gap: 3px;
  margin-left: 12px;
}
.spinner {
  width: 43px;
  height: 21px;
  border: 1px solid #b5b8ba;
  background: #fff;
  display: flex;
  align-items: center;
  padding: 0 4px;
}
.spinner input {
  width: 27px;
}
.spin-arrows {
  display: flex;
  flex-direction: column;
  gap: 6px;
}
.spin-arrows .caret {
  border-width: 3px 2px 0;
}
.spin-arrows .caret.up {
  border-width: 0 2px 3px;
  border-bottom-color: #444a4b;
}
.plane {
  display: flex;
  align-items: center;
  gap: 2px;
  color: #a9adae;
}
.plane input {
  width: 124px;
  height: 21px;
  border: 1px solid #cfd1d3;
  background: #faf9fe;
}
.g-pause, .g-ok {
  display: flex;
  align-items: center;
  justify-content: center;
  padding: 0;
}
.g-pause svg {
  display: block;
  width: 20px;
  height: 20px;
}
.g-ok {
  flex: 1;
  gap: 10px;
  border: none;
}
.g-ok button {
  display: flex;
  flex-direction: column;
  align-items: center;
  gap: 4px;
  padding-top: 4px;
}
.g-ok svg {
  width: 23px;
  height: 18px;
}
.subtabs {
  height: 20px;
  background: #e8e9eb;
  display: flex;
  gap: 1px;
  padding-left: 45px;
}
.subtabs button {
  width: 48px;
  background: #dedfe1;
  border-right: 1px solid #f3f4f5;
}
.subtabs button.wide {
  width: 59px;
}
.help {
  flex: 1;
  padding: 9px 10px 9px 15px;
  border-right: 1px solid #c6c9cb;
}
.help-box {
  height: 75px;
  background: #dfe0e2;
  padding: 8px 5px 6px;
  display: flex;
  flex-direction: column;
  justify-content: space-between;
}
.help-box a {
  color: #1a6fa8;
  text-decoration: underline;
}
.side-tools {
  width: 39px;
  display: flex;
  flex-direction: column;
  align-items: center;
  gap: 8px;
  padding: 3px 0 0 4px;
}

/* navigator */
main {
  flex: 1;
  min-height: 0;
  display: flex;
}
aside {
  width: 244px;
  flex: none;
  background: #f8f9fb;
  border-right: 3px solid #dbe0e0;
  display: flex;
  flex-direction: column;
}
.aside-tabs {
  height: 21px;
  background: #d8dfde;
  display: flex;
}
.aside-tabs button {
  padding: 0 4px 0 6px;
}
.aside-tabs button.on {
  width: 27px;
  padding-left: 8px;
  background: #f8f9fb;
}
.bar {
  height: 27px;
  display: flex;
  align-items: center;
  padding: 0 6px 0 11px;
  gap: 3px;
}
.grip {
  height: 13px;
  border-left: 2px dotted #aab0b0;
  margin: 0 14px 0 1px;
}
.vsep {
  height: 20px;
  border-left: 1px solid #c0c4c5;
  margin: 0 1px;
}
.boxed {
  width: 20px;
  height: 20px;
  border: 1px solid #aeb1b3;
  background: #dfe0e2;
  display: flex;
  align-items: center;
  justify-content: center;
}
.boxed-set {
  display: flex;
}
.more-btns {
  margin-left: auto;
  display: flex;
  align-items: center;
  gap: 6px;
  font-size: 14px;
}
.search {
  height: 24px;
  display: flex;
  align-items: center;
  gap: 2px;
  padding: 0 9px 0 9px;
}
.search-box {
  width: 176px;
  height: 24px;
  border: 1px solid #b9c1c1;
  background: #fff;
  display: flex;
  align-items: center;
  justify-content: space-between;
  padding: 0 4px;
}
.search-box i {
  color: #999;
  font-style: normal;
}
.search .caret {
  margin: 0 5px;
}
.search b {
  color: #8b9090;
  font-size: 18px;
}
.pane {
  display: flex;
  margin: 0 4px 0 8px;
  border-bottom: 2px solid #dbe0e0;
}
.model-pane {
  height: 176px;
  padding-top: 3px;
}
.layer-pane {
  height: 102px;
}
.tree {
  flex: 1;
  overflow: hidden;
}
.row {
  height: 18px;
  display: flex;
  align-items: center;
  gap: 3px;
  padding-left: 17px;
  position: relative;
  white-space: nowrap;
}
.row .icon {
  width: 14px;
  height: 14px;
  margin-right: 1px;
}
.row::before {
  content: "";
  position: absolute;
  left: 8px;
  top: 0;
  width: 6px;
  height: 100%;
  border-left: 1px solid #c3c7c8;
  background: linear-gradient(#c3c7c8, #c3c7c8) center / 100% 1px no-repeat;
}
.row.last::before {
  height: 50%;
  background: none;
  border-bottom: 1px solid #c3c7c8;
}
.row.root {
  padding-left: 0;
}
.row.root::before {
  display: none;
}
.row.open::after {
  content: "";
  position: absolute;
  left: 6px;
  border: 3px solid transparent;
  border-left: 4px solid #555;
  border-right: none;
}
.model-pane .row.open {
  height: 19px;
}
.row .star {
  width: 8px;
  height: 8px;
  margin: 0 -3px 5px 0;
}
.insert-line {
  height: 3px;
  margin: 6px 0 4px;
  border: solid #5ab947;
  border-width: 0 2px;
  background: linear-gradient(#6ccc55, #6ccc55) center / 100% 2px no-repeat;
}
.layer-pane .row {
  height: 17px;
  gap: 6px;
}
.layer-pane .row:last-child {
  height: 15px;
}
.scroll {
  width: 12px;
  border: 1px solid #cfd1d3;
  background: #e4e5e7;
  display: flex;
  flex-direction: column;
  align-items: center;
  justify-content: space-between;
  padding: 4px 0;
}
.scroll .caret {
  border-top-color: #8b9090;
}
.thumb {
  width: 100%;
  height: 40px;
  margin: 4px 0 auto;
  background: #f8f9fb;
  border: solid #cfd1d3;
  border-width: 1px 0;
}
.thumb.long {
  height: 138px;
}
.model-select {
  height: 20px;
  flex: none;
  margin: 0 4px 0 7px;
  border: 1px solid #cfd1d3;
  display: flex;
  align-items: center;
}
.model-select .icon {
  width: 19px;
  padding: 1px;
}
.model-select select {
  appearance: none;
  flex: 1;
  height: 18px;
  border: solid #cfd1d3;
  border-width: 0 1px;
  padding-left: 6px;
  color: #a9adae;
  opacity: 1;
}
.model-select .caret {
  margin: 0 3px;
}
.style-bar {
  height: 26px;
}
.style-tree {
  padding: 2px 0 0 8px;
}

/* graphics area */
.viewport {
  flex: 1;
  min-width: 0;
  background: #fff;
  position: relative;
  overflow: hidden;
}
.scene {
  display: block;
  width: 100%;
  height: 100%;
}
.view-tools {
  position: absolute;
  left: 327px;
  top: 5px;
  width: 371px;
  height: 27px;
  padding: 0 1px;
  border: 1px solid #a5abac;
  background: #f8f9fb;
  display: flex;
  align-items: center;
  justify-content: space-between;
}
.view-tools button {
  width: 20px;
  height: 20px;
  display: flex;
  align-items: center;
  justify-content: center;
}
.view-tools button.on {
  background: #dedfe1;
  border: 1px solid #b5b8ba;
}
.brown path {
  fill: none;
  stroke: #a67c50;
}
.sel {
  fill: none;
  stroke: #2ee4e4;
  stroke-width: 3px;
}
.black {
  stroke: #333;
}
.blue {
  fill: none;
  stroke: #2a22d8;
}
.cad {
  font-family: "Liberation Mono", monospace;
  font-size: 12px;
  fill: #a67c50;
}
.note {
  font-family: "Liberation Sans", "Noto Sans CJK SC", sans-serif;
  font-size: 20px;
  font-weight: 300;
  fill: #f00;
}

/* status bar */
footer {
  height: 32px;
  flex: none;
  background: #f4f7f8;
  border-top: 1px solid #cfd6d6;
  display: flex;
  overflow: hidden;
}
.foot-icons {
  display: flex;
  align-items: center;
  gap: 5px;
  padding: 16px 8px 0 4px;
}
.messages {
  flex: 1;
  padding: 6px 0 0 2px;
  font-family: Inter, "Noto Sans CJK SC", sans-serif;
  font-size: 9px;
  line-height: 13px;
  white-space: nowrap;
}
.messages p {
  display: flex;
  align-items: center;
}
.messages svg {
  width: 12px;
  height: 10px;
}
.picker {
  width: 280px;
  display: flex;
  align-items: center;
  padding-top: 16px;
  border-left: 1px solid #cfd6d6;
}
.find {
  display: flex;
  align-items: center;
  gap: 4px;
  width: 38px;
  height: 18px;
  margin-left: 4px;
  padding-left: 4px;
  border: 1px solid #cfd6d6;
}
.picker label {
  width: 80px;
  padding-left: 3px;
}
.filter {
  display: flex;
  align-items: center;
  width: 147px;
  height: 20px;
  border: 1px solid #b9c1c1;
}
.filter select {
  appearance: none;
  flex: 1;
  height: 18px;
  padding-left: 5px;
}
.filter .caret {
  margin: 0 4px;
}

/* tangent menu */
.popup {
  position: absolute;
  left: 902px;
  top: 461px;
  width: 121px;
  border: 1px solid #a9b0b3;
  background: linear-gradient(90deg, #f9fafa 19px, #dcdfe0 19px, #dcdfe0 20px, #fff 20px);
  box-shadow: 2px 2px 2px #888;
}
.popup .item {
  height: 19px;
  display: flex;
  align-items: center;
  gap: 10px;
  padding-left: 5px;
  white-space: nowrap;
}
.popup .sub {
  padding: 0 4px 0 25px;
  justify-content: space-between;
  color: #adb1b2;
}
.popup .sub i {
  border: 3px solid transparent;
  border-left: 4px solid #adb1b2;
  border-right: none;
}
.popup .hover {
  background: #d0f0fe;
}
.popup input {
  appearance: none;
  width: 10px;
  height: 10px;
  border: 1px solid #777;
  border-radius: 50%;
  background: #fff;
}
.popup input:checked {
  background: radial-gradient(#333 2px, #fff 3px);
}
.popup hr {
  margin: 3px 2px 4px 22px;
  border: none;
  border-top: 1px solid #dcdfe0;
}
.tip {
  position: absolute;
  left: 34px;
  top: 137px;
  width: 73px;
  height: 26px;
  line-height: 24px;
  text-align: center;
  white-space: nowrap;
  background: #fff;
  border: 1px solid #9bcfe8;
  box-shadow: 2px 2px 2px #777;
}

/* forum logo */
.watermark {
  position: absolute;
  right: 22px;
  bottom: 7px;
  font-style: italic;
}
.wm-name {
  font-family: "Noto Sans CJK SC", sans-serif;
  font-size: 40px;
  line-height: 44px;
  font-weight: 400;
  color: #f4673a;
  display: flex;
  justify-content: space-between;
  position: relative;
}
.wm-name .dark {
  color: #111;
}
.wm-name svg {
  position: absolute;
  left: 63px;
  top: -16px;
  width: 20px;
  height: 44px;
}
.wm-url {
  font-family: "DejaVu Sans", sans-serif;
  font-size: 15px;
  line-height: 18px;
  color: #999;
}
```
